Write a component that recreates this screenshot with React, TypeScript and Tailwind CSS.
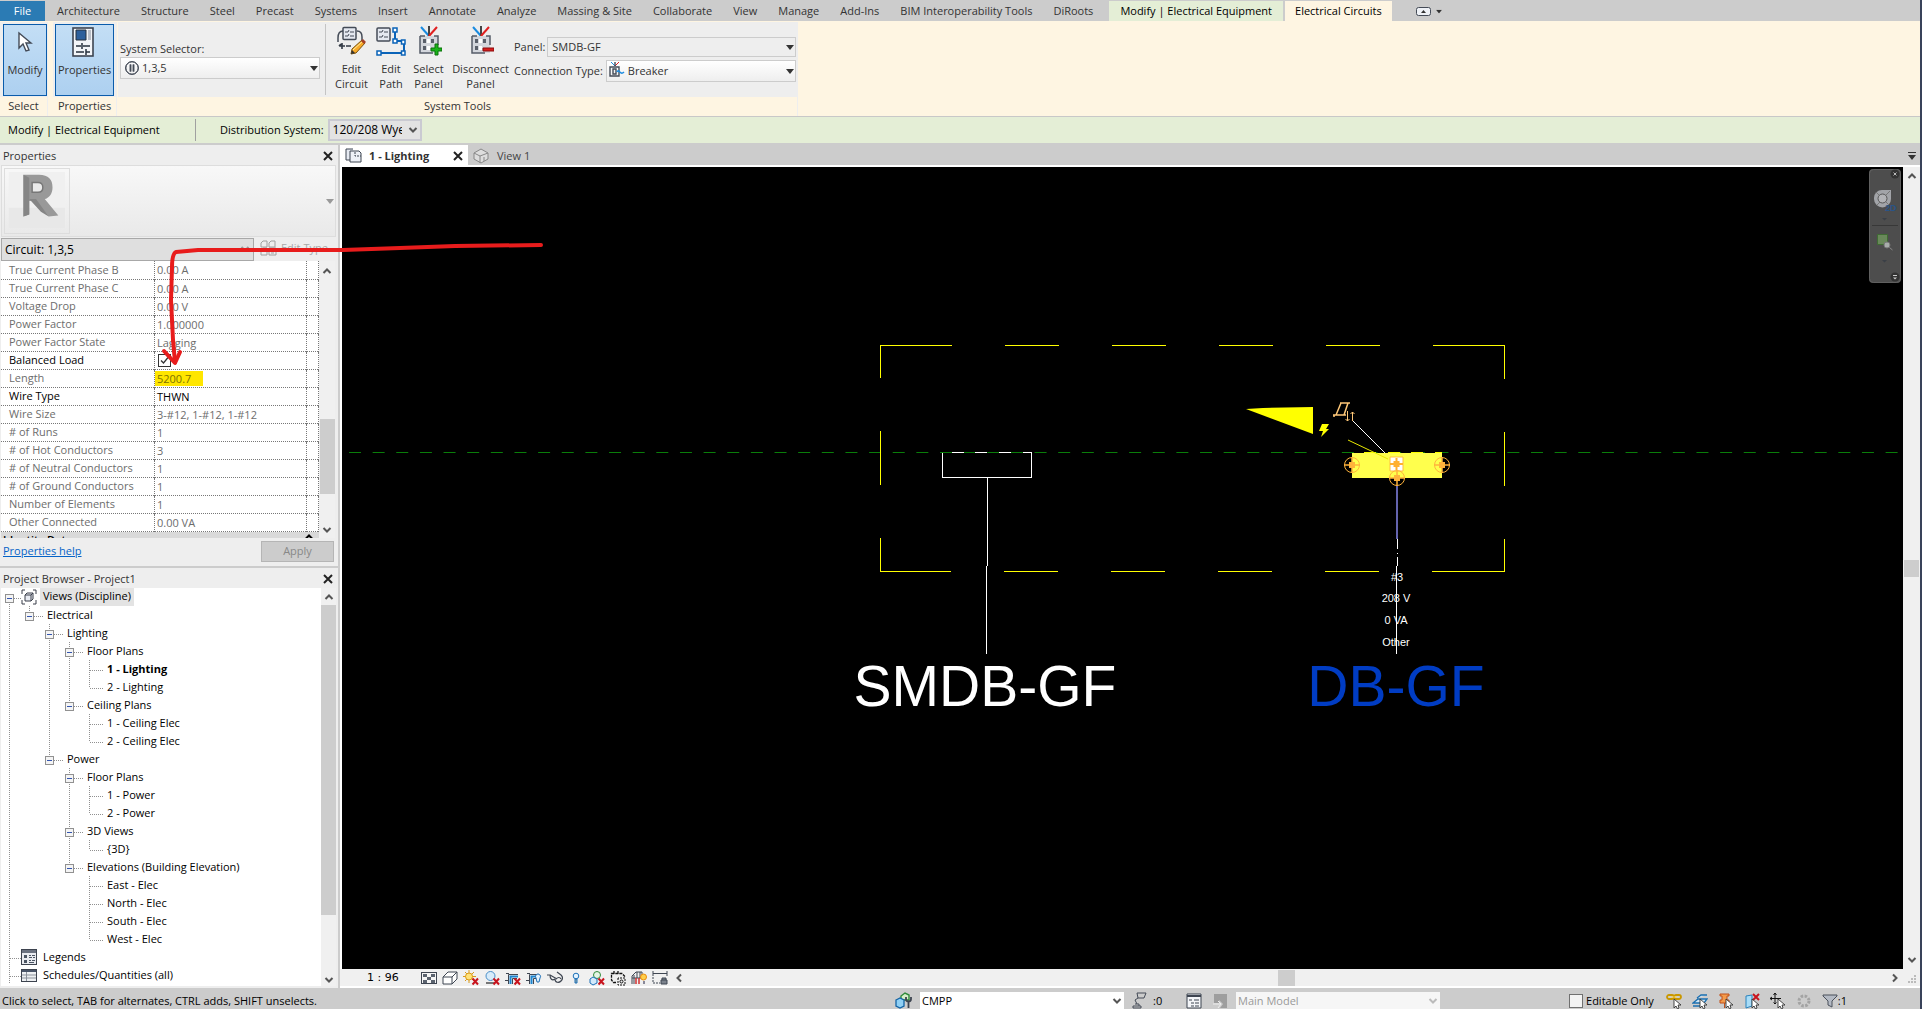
import React from 'react';

const ribbonTabs = [
  'Architecture', 'Structure', 'Steel', 'Precast', 'Systems', 'Insert', 'Annotate', 'Analyze',
  'Massing & Site', 'Collaborate', 'View', 'Manage', 'Add-Ins', 'BIM Interoperability Tools', 'DiRoots',
];

const properties = [
  { name: 'True Current Phase B', value: '0.00 A' },
  { name: 'True Current Phase C', value: '0.00 A' },
  { name: 'Voltage Drop', value: '0.00 V' },
  { name: 'Power Factor', value: '1.000000' },
  { name: 'Power Factor State', value: 'Lagging' },
  { name: 'Balanced Load', value: 'check', editable: true },
  { name: 'Length', value: '5200.7', marked: true },
  { name: 'Wire Type', value: 'THWN', editable: true },
  { name: 'Wire Size', value: '3-#12, 1-#12, 1-#12' },
  { name: '# of Runs', value: '1' },
  { name: '# of Hot Conductors', value: '3' },
  { name: '# of Neutral Conductors', value: '1' },
  { name: '# of Ground Conductors', value: '1' },
  { name: 'Number of Elements', value: '1' },
  { name: 'Other Connected', value: '0.00 VA' },
];

// guides: one letter per level. v = line, m = box with siblings below, e = last box,
// f = first box, t = tee, l = elbow, o = empty
const treeRows = [
  { guides: 'f', label: 'Views (Discipline)', icon: 'views', selected: true },
  { guides: 've', label: 'Electrical' },
  { guides: 'vom', label: 'Lighting' },
  { guides: 'vovm', label: 'Floor Plans' },
  { guides: 'vovvt', label: '1 - Lighting', bold: true },
  { guides: 'vovvl', label: '2 - Lighting' },
  { guides: 'vove', label: 'Ceiling Plans' },
  { guides: 'vovot', label: '1 - Ceiling Elec' },
  { guides: 'vovol', label: '2 - Ceiling Elec' },
  { guides: 'voe', label: 'Power' },
  { guides: 'voom', label: 'Floor Plans' },
  { guides: 'voovt', label: '1 - Power' },
  { guides: 'voovl', label: '2 - Power' },
  { guides: 'voom', label: '3D Views' },
  { guides: 'voovl', label: '{3D}' },
  { guides: 'vooe', label: 'Elevations (Building Elevation)' },
  { guides: 'vooot', label: 'East - Elec' },
  { guides: 'vooot', label: 'North - Elec' },
  { guides: 'vooot', label: 'South - Elec' },
  { guides: 'voool', label: 'West - Elec' },
  { guides: 't', label: 'Legends', icon: 'legends' },
  { guides: 't', label: 'Schedules/Quantities (all)', icon: 'schedules' },
];

const Caret: React.FC<{ className?: string }> = ({ className = '' }) => (
  <svg viewBox="0 0 8 5" className={`w-2 h-[5px] pointer-events-none ${className}`}>
    <path d="M0 0H8L4 5Z" fill="currentColor" />
  </svg>
);

const Chevron: React.FC<{ d: string; className?: string }> = ({ d, className = '' }) => (
  <svg viewBox="0 0 10 10" className={`w-[10px] h-[10px] pointer-events-none ${className}`}>
    <path d={d} fill="none" stroke="currentColor" strokeWidth="2" />
  </svg>
);
const UP = 'M1.5 7 5 3.5 8.5 7';
const DOWN = 'M1.5 3 5 6.5 8.5 3';
const LEFT = 'M7 1.5 3.5 5 7 8.5';
const RIGHT = 'M3 1.5 6.5 5 3 8.5';

const Cross: React.FC = () => (
  <svg viewBox="0 0 10 10" className="w-[10px] h-[10px]">
    <path d="M1 1 9 9M9 1 1 9" stroke="#222" strokeWidth="2" />
  </svg>
);

const CircuitIcon: React.FC<{ kind: string }> = ({ kind }) => {
  if (kind === 'circuit') {
    return (
      <svg viewBox="0 0 30 30" className="w-[30px] h-[30px]" fill="none">
        <path d="M6 5C2 5 1 8 1 12M1 12v4M20 5c4 0 5 3 5 6v5" stroke="#444b57" strokeWidth="1.5" />
        <rect x="6" y="1.5" width="13" height="12" rx="1" fill="#e4e8f0" stroke="#444b57" strokeWidth="1.5" />
        <path d="M8 6h3l1-2M13 6h4M8 10h3l1-2M13 10h4" stroke="#444b57" />
        <path d="M2 20h6M5 17v6M2 20l2-2M9 20h5" stroke="#333a45" strokeWidth="1.6" />
        <path d="m14 28 1-5 10-9 3 3-9 10z" fill="#f7a928" stroke="#7a5310" />
        <path d="m16 24 10-9" stroke="#fff0a0" />
        <path d="m14 28 1-4 3 3z" fill="#333" />
        <path d="m24 15 2-2 3 3-2 2z" fill="#a54028" />
      </svg>
    );
  }
  if (kind === 'path') {
    return (
      <svg viewBox="0 0 30 30" className="w-[30px] h-[30px]" fill="none">
        <rect x="1" y="2" width="13" height="13" rx="1" fill="#e4e8f0" stroke="#444b57" strokeWidth="1.5" />
        <path d="M3 6h3l1-2M8 6h4M3 11h3l1-2M8 11h4" stroke="#444b57" />
        <path d="M19 6v9h9v12H4" stroke="#0a63b8" strokeWidth="2" />
        <g fill="#fff" stroke="#0a63b8" strokeWidth="1.5">
          <rect x="17" y="2" width="4" height="4" />
          <rect x="17" y="13" width="4" height="4" />
          <rect x="25.5" y="14" width="3.5" height="4" />
          <rect x="25.5" y="25" width="3.5" height="4" />
          <rect x="1" y="25" width="4" height="4" />
        </g>
      </svg>
    );
  }
  return (
    <svg viewBox="-3 0 26 30" className="w-[26px] h-[30px]" fill="none">
      <path d="M2 1 10 10" stroke="#1a8be0" strokeWidth="2" />
      <path d="M10 0v10" stroke="#444" strokeWidth="2" />
      <path d="M18 1 10 10" stroke="#e02020" strokeWidth="2" />
      <path d="M1 10h18v17H1z" fill="#d3d6dc" />
      <path d="M1 10v17h13M1 10h5M15 10h4v9" stroke="#555c68" strokeWidth="1.5" />
      <path d="M4 13h3v4H4zM12 13h3v4h-3zM4 20h3v4H4z" fill="#5a606b" />
      <path d="M8 13h3v4H8zM8 20h3v4H8z" fill="#fff" />
      {kind === 'select' ? (
        <path d="M16 18h3v4h4v3h-4v4h-3v-4h-4v-3h4z" fill="#19b319" stroke="#0b700b" />
      ) : (
        <path d="M12 22h11v3H12z" fill="#d81e1e" stroke="#8b0d0d" />
      )}
    </svg>
  );
};

const ToolButton: React.FC<{ kind: string; lines: string[]; className: string }> = ({ kind, lines, className }) => (
  <button className={`flex flex-col items-center pt-1 ${className}`}>
    <CircuitIcon kind={kind} />
    <span className="mt-[5px] leading-[15px] text-center">
      {lines[0]}
      <br />
      {lines[1]}
    </span>
  </button>
);

const Guide: React.FC<{ type: string; last: boolean; short: boolean }> = ({ type, last, short }) => {
  const box = 'mef'.includes(type);
  return (
    <svg className={`h-[18px] shrink-0 ${last && !short ? 'w-[26px]' : 'w-5'}`} fill="none">
      <g stroke="#909090" strokeDasharray="1 1" shapeRendering="crispEdges">
        {'vtm'.includes(type) && <path d="M8.500 0V18" />}
        {'le'.includes(type) && <path d="M8.500 0V10" />}
        {type === 'f' && <path d="M8.500 10V18" />}
        {last && <path d={short ? 'M9 10.500H20' : 'M9 10.500H23'} />}
      </g>
      {box && (
        <g shapeRendering="crispEdges">
          <rect x="4.5" y="6.5" width="8" height="8" fill="#f4f4f4" stroke="#919191" />
          <path d="M6 10.500h5" stroke="#3355b0" />
        </g>
      )}
    </svg>
  );
};

const TreeIcon: React.FC<{ kind: string }> = ({ kind }) => (
  <svg viewBox="0 0 16 16" className="w-4 h-4 mr-[6px] shrink-0" fill="none">
    {kind === 'views' && (
      <g stroke="#3a3f4a">
        <path d="M4 1H1V5M12 1h3v4M4 15H1v-4M12 15h3v-4" />
        <path d="M4 6 6 4h6v6l-2 2H4zM4 6h6v6M10 6l2-2" fill="#e8ebf2" />
      </g>
    )}
    {kind === 'legends' && (
      <g>
        <rect x=".5" y=".5" width="15" height="15" fill="#e9ebf0" stroke="#3d434f" />
        <path d="M1 1h14v3H1z" fill="#6b7280" />
        <path d="M3 6h3v3H3zM3 11h3v3H3z" fill="#4b5563" />
        <path d="M8 6.500h2M11 6.500h3M8 8.500h3M12 8.500h2M8 11.500h2M11 11.500h3M8 13.500h5" stroke="#4b5563" />
      </g>
    )}
    {kind === 'schedules' && (
      <g>
        <rect x=".5" y="2.5" width="15" height="12" fill="#eef0f2" stroke="#3d434f" />
        <path d="M1 3h14v2H1z" fill="#4a5568" />
        <path d="M1 8h14M1 11h14M5.500 5v9" stroke="#8d939c" />
      </g>
    )}
  </svg>
);

const RedX: React.FC = () => <path d="m9.500 8.500 5.500 6M15 8.500l-5.500 6" stroke="#c8141e" strokeWidth="2" />;

const ViewIcon: React.FC<{ i: number }> = ({ i }) => (
  <svg viewBox="0 0 16 16" className="w-4 h-4 shrink-0" fill="none" stroke="#3f4652">
    {i === 0 && (
      <g>
        <rect x=".5" y="2.5" width="15" height="11" fill="#f5f5f5" />
        <path d="M2 4h4v3H2zM10 4h4v3h-4zM6 7h4v3H6zM2 10h4v3H2zM10 10h4v3h-4z" fill="#5b636f" stroke="none" />
      </g>
    )}
    {i === 1 && <path d="M1 7 6 2h9v7l-5 5H1zM1 7h9v7M10 7l5-5" fill="#fff" />}
    {i === 2 && (
      <g>
        <path d="M6 0v13M0 6.500h13M2 2l9 9M11 2l-9 9" stroke="#d99a18" />
        <circle cx="6" cy="6.5" r="3.5" fill="#ffe27a" stroke="#d99a18" />
        <RedX />
      </g>
    )}
    {i === 3 && (
      <g>
        <circle cx="6.5" cy="6" r="4.5" fill="#d7ebfa" stroke="#4a8fc9" />
        <path d="M2 13h9" stroke="#777" strokeWidth="2" />
        <RedX />
      </g>
    )}
    {(i === 4 || i === 5) && (
      <g>
        <path d="M0 10.500h3M3.500 14V4.500H13M7.500 14V8.500H12M1 3.500h3" />
        <path d="M5.500 14V6.500H13" stroke="#1c86d1" strokeWidth="2" />
        {i === 4 ? <RedX /> : <path d="M10 8a2.500 2.500 0 1 1 4 0l-1 4h-2z" fill="#e3f3ff" stroke="#1c70b8" />}
      </g>
    )}
    {i === 6 && <path d="M0 5h3c0 4 2 6 5 4M3 5l7 4M8 9c0 4 4 4 6 2s2-4 0-6l-4-3M9 9c2-2 4-2 5 0" strokeWidth="1.2" />}
    {i === 7 && (
      <g>
        <circle cx="8" cy="6" r="2.8" fill="#e3f3ff" stroke="#1c70b8" />
        <path d="M7 9h2v4H7z" fill="#9aa" stroke="#1c70b8" />
      </g>
    )}
    {i === 8 && (
      <g>
        <circle cx="8" cy="5" r="3.5" fill="#e4f5e4" stroke="#2f8a3a" />
        <path d="m1 9 3-2 4 2v4l-4 2-3-2z" fill="#d3eafb" stroke="#1c70b8" />
        <RedX />
      </g>
    )}
    {i === 9 && (
      <g>
        <path d="M6 12.500H3.500L1.500 10V3.500H12L14.500 6v1M4 1v3M8 1v3" stroke="#111" strokeWidth="1.3" strokeDasharray="3 1" />
        <path d="M8 8v7h7V8z" stroke="#111" strokeDasharray="2 1" />
        <circle cx="11.5" cy="11.5" r="1.5" stroke="#111" />
      </g>
    )}
    {i === 10 && (
      <g>
        <path d="M1 14V6l4-4h6v6M3 14V5M1 8h10M6 2v6M9 2v6" />
        <path d="M5 14V8M8 14V8" stroke="#d03030" strokeWidth="1.5" />
        <circle cx="12.5" cy="7" r="3" fill="#ffcf4a" stroke="#e88a10" />
        <path d="M12 11h2v3h-2z" fill="#889" stroke="none" />
      </g>
    )}
    {i === 11 && (
      <g>
        <path d="M1 1v5M15 1v5M1 3.500h14" />
        <path d="M1 7v6h7" strokeDasharray="2 1" />
        <path d="M9 10h6v4H9zM10 10V8h4v2" fill="#7b828c" />
      </g>
    )}
  </svg>
);

const Cursor: React.FC = () => (
  <path d="M8 6v9l2-2 1.500 3 1.500-1-1-3h3z" fill="#fff" stroke="#333" strokeWidth=".9" />
);

const SelectIcon: React.FC<{ i: number }> = ({ i }) => (
  <svg viewBox="0 0 16 16" className="w-4 h-4 shrink-0" fill="none">
    {i === 0 && (
      <g>
        <rect x="1" y="2" width="7" height="4" rx="2" stroke="#c99700" strokeWidth="1.8" />
        <rect x="8" y="2" width="7" height="4" rx="2" stroke="#c99700" strokeWidth="1.8" />
        <path d="M5 4h6" stroke="#ffd850" />
      </g>
    )}
    {i === 1 && <path d="M1 10 6 6h9l-3 4zM5 5l4-3h6M1 13h8" fill="#cfe8fa" stroke="#1b6fb0" strokeWidth="1.3" />}
    {i === 2 && <path d="M2 1h9v2H9v4h2v3H2V7h2V3H2zM6.500 10v5" fill="#f39a4b" stroke="#c0501a" />}
    {i === 3 && (
      <g>
        <path d="M2 3 8 2v11l-6 2z" fill="#a8dcf7" stroke="#2b83bd" />
        <path d="m9 1 6 6M15 1 9 7" stroke="#c8141e" strokeWidth="2" />
      </g>
    )}
    {i === 4 && <path d="M5 0v11M0 5.500h11M3.500 2 5 0l1.500 2M2 4 0 5.500 2 7M3.500 9.500 5 11l1.500-1.500" stroke="#111" />}
    {i === 5 && <circle cx="8" cy="8" r="5" stroke="#a3a3a3" strokeWidth="3" strokeDasharray="2.5 1.43" />}
    {i === 6 && <path d="M1 2h14v1l-5 5v6l-4-2V8L1 3z" fill="#b4bac4" stroke="#4a505b" />}
    {i < 5 && <Cursor />}
  </svg>
);

const Canvas: React.FC = () => (
  <svg viewBox="342 167 1561 802" className="w-full h-full block bg-black" fill="none">
    <path d="M349 452.500H1899" stroke="#0a7d0a" strokeWidth="1" strokeDasharray="12 11.640" />
    <g stroke="#ffff00" shapeRendering="crispEdges">
      <path d="M880.500 378V345.500H952M1005 345.500h54M1112 345.500h54M1219 345.500h54M1326 345.500h54M1433 345.500h71.500V379" />
      <path d="M880.500 538v33.500H951M1004 571.500h54M1111 571.500h54M1218 571.500h54M1325 571.500h54M1432 571.500h72.500V539" />
      <path d="M880.500 431v54M1504.500 432v54" />
    </g>

    {/* SMDB-GF panel */}
    <g stroke="#fff" shapeRendering="crispEdges">
      <path d="M942.500 453V477.500H1031.500V452.500H1023M952 452.500h12M975 452.500h12M999 452.500h12" />
      <path d="M987.500 478v88M986.500 566v88" />
    </g>
    <text x="985" y="706" textAnchor="middle" fill="#fff" fontSize="57" fontFamily="Liberation Sans, sans-serif">SMDB-GF</text>

    {/* tag and switch symbols */}
    <path d="M1246 409 1263 408 1313 407V434Z" fill="#ffff00" />
    <path d="M1322 424h7l-3 5h3l-8 8 2-6h-4z" fill="#ffff00" />
    <g stroke="#ffc878" strokeWidth="1.5">
      <path d="M1340 403h10M1341 403l-5 12M1348 403l-4 12M1333 415h13M1334 417v-2" />
      <path d="M1347.500 411v10M1345.500 419l2 2 2-2M1352.500 421v-9M1350.500 414l2-2 2 2" strokeWidth="1" />
    </g>
    <path d="M1353 421 1390 458" stroke="#fff" />

    {/* DB-GF panel */}
    <path d="M1352 453h90v25h-90z" fill="#ffff4d" />
    <path d="M1364 452.500h12M1388 452.500h12M1411 452.500h12M1435 452.500h7" stroke="#ffff00" />
    <path d="M1348 440 1388 459" stroke="#e8e800" />
    <path d="M1390 457h13v14h-13z" fill="#fff" stroke="#ffc040" />
    <path d="M1396.500 458v12M1390 464h13" stroke="#ffb030" strokeWidth="2" />
    <path d="M1393.500 461h6v6h-6z" fill="#ffb030" />
    {[[1352, 465], [1442, 465], [1397, 478]].map(([x, y]) => (
      <g key={x} stroke="#ffb43c">
        <circle cx={x} cy={y} r="7.5" />
        <path d={`M${x - 8} ${y}h16M${x} ${y - 8}v16`} strokeWidth="1.5" />
        <path d={`M${x - 3} ${y - 3}h6v6h-6z`} fill="#ffb43c" stroke="none" />
      </g>
    ))}
    <path d="M1397 486v53" stroke="#8484e8" strokeWidth="1.5" />
    <path d="M1397.500 539v10M1397.500 553v1M1397.500 557v9M1396.500 566v88" stroke="#fff" shapeRendering="crispEdges" />
    <g fill="#fff" fontSize="11" textAnchor="middle" fontFamily="Liberation Sans, sans-serif">
      <text x="1397" y="581">#3</text>
      <text x="1396" y="602">208 V</text>
      <text x="1396" y="624">0 VA</text>
      <text x="1396" y="646">Other</text>
    </g>
    <text x="1396" y="706" textAnchor="middle" fill="#003cc3" fontSize="57" fontFamily="Liberation Sans, sans-serif">DB-GF</text>
  </svg>
);

const App: React.FC = () => {
  return (
    <div className="relative h-screen flex overflow-hidden bg-[#cccccc] text-[11px] leading-4 text-black font-['Open_Sans',sans-serif]">
      <div className="flex-1 min-w-0 flex flex-col">
        {/* Ribbon tabs */}
        <nav className="h-[21px] pt-px flex gap-px shrink-0 text-[#333]">
          <button className="w-[45px] bg-[#2b7bb4] text-white mr-px">File</button>
          {ribbonTabs.map((tab) => (
            <button key={tab} className="px-[10px] whitespace-nowrap">{tab}</button>
          ))}
          <button className="px-[11px] ml-[5px] whitespace-nowrap bg-[#e4eed6] text-black">Modify | Electrical Equipment</button>
          <button className="px-[10px] ml-px whitespace-nowrap bg-[#fef5e2] text-black">Electrical Circuits</button>
          <button className="ml-[23px] flex items-center gap-1" aria-label="Minimize ribbon">
            <svg viewBox="0 0 15 9" className="w-[15px] h-[9px]">
              <rect x=".5" y=".5" width="14" height="8" rx="2" fill="#eef1f6" stroke="#444b57" />
              <path d="M5 6h5L7.500 3z" fill="#333" />
            </svg>
            <Caret className="scale-75" />
          </button>
        </nav>

        {/* Ribbon */}
        <header className="h-24 pt-px flex shrink-0 bg-[#fef5e2] border-b border-[#c8c8c8] text-[#333]">
          <section className="flex flex-col w-12 mr-[5px] border-r border-[#eee]">
            <div className="h-[75px] bg-[#eee] pl-[3px] pt-[2px] flex">
              <button className="w-11 h-[72px] border border-[#0a5cab] bg-linear-to-b from-[#c3def5] to-[#add0f0] flex flex-col items-center">
                <svg viewBox="0 0 16 22" className="w-4 h-[22px] mt-[6px]">
                  <path d="M2 2v15l4-4 3 7 3-1-3-7h5z" fill="#fff" stroke="#444b57" strokeWidth="1.4" />
                </svg>
                <span className="mt-[9px]">Modify</span>
              </button>
            </div>
            <span className="text-center pt-px">Select</span>
          </section>
          <section className="flex flex-col w-[64px] mr-px border-r border-[#eee]">
            <div className="h-[75px] bg-[#eee] pl-[2px] pt-[2px] flex">
              <button className="w-[59px] h-[72px] border border-[#0a5cab] bg-linear-to-b from-[#c3def5] to-[#add0f0] flex flex-col items-center">
                <svg viewBox="0 0 26 30" className="w-[26px] h-[30px] mt-[2px]" fill="none">
                  <rect x="1" y="1" width="20" height="28" fill="#f3f5f8" stroke="#3d4450" strokeWidth="1.6" />
                  <path d="M4 3h10v10H4z" fill="#2d5f9b" stroke="#27303d" />
                  <path d="M16 3h3v10h-3z" fill="#b9bec7" />
                  <path d="M4 19h5M11 19h7M10 16v6M4 25h8M14 25h4M14 22v6" stroke="#27303d" strokeWidth="1.5" />
                </svg>
                <span className="mt-[5px]">Properties</span>
              </button>
            </div>
            <span className="text-center pt-px">Properties</span>
          </section>
          <section className="flex flex-col w-[680px] border-r border-[#eee]">
            <div className="h-[75px] bg-[#eee] flex">
              <div className="w-[202px] pl-[2px] pt-[19px] flex flex-col">
                <label htmlFor="system">System Selector:</label>
                <div className="relative h-[22px]">
                  <svg viewBox="0 0 14 14" className="absolute left-[5px] top-1 w-[14px] h-[14px]" fill="none" stroke="#444b57">
                    <circle cx="7" cy="7" r="6.3" />
                    <path d="M5.500 3.500v7M8.500 3.500v7" strokeWidth="1.5" />
                  </svg>
                  <select id="system" className="w-full h-full appearance-none pl-[21px] border border-[#ccc] bg-linear-to-b from-white to-[#eee]">
                    <option>1,3,5</option>
                  </select>
                  <svg viewBox="0 0 14 14" className="absolute left-[5px] top-1 w-[14px] h-[14px] pointer-events-none" fill="none" stroke="#444b57">
                    <circle cx="7" cy="7" r="6.3" />
                    <path d="M5.500 3.500v7M8.500 3.500v7" strokeWidth="1.5" />
                  </svg>
                  <Caret className="absolute right-[2px] top-[9px]" />
                </div>
              </div>
              <div className="w-px ml-[5px] my-[2px] bg-[#c4c4c4]" />
              <div className="flex items-start ml-1">
                <ToolButton kind="circuit" lines={['Edit', 'Circuit']} className="w-[43px]" />
                <ToolButton kind="path" lines={['Edit', 'Path']} className="w-9" />
                <ToolButton kind="select" lines={['Select', 'Panel']} className="w-[39px]" />
                <ToolButton kind="disconnect" lines={['Disconnect', 'Panel']} className="w-[65px]" />
              </div>
              <div className="flex-1 min-w-0 flex flex-col pt-[15px] pl-px pr-px gap-[3px]">
                <div className="flex items-center gap-[2px]">
                  <label htmlFor="panel">Panel:</label>
                  <div className="relative flex-1 h-5">
                    <select id="panel" className="w-full h-full appearance-none pl-1 border border-[#ccc] bg-[#eee]">
                      <option>SMDB-GF</option>
                    </select>
                    <Caret className="absolute right-[2px] top-2" />
                  </div>
                </div>
                <div className="flex items-center gap-[3px]">
                  <label htmlFor="connection" className="whitespace-nowrap">Connection Type:</label>
                  <div className="relative flex-1 h-[22px]">
                    <select id="connection" className="w-full h-full appearance-none pl-[21px] border border-[#ccc] bg-linear-to-b from-white to-[#eee]">
                      <option>Breaker</option>
                    </select>
                    <svg viewBox="0 0 16 16" className="absolute left-[3px] top-[2px] w-4 h-4 pointer-events-none" fill="none">
                      <path d="m2 0 4 4" stroke="#1a8be0" />
                      <path d="m10 0-4 4" stroke="#e02020" />
                      <path d="M6 0v4M1 5h9v9H1zM4 7h3v5H4z" stroke="#444b57" strokeWidth="1.4" />
                      <path d="M8 10c2-4 3 4 7 0" stroke="#1a8be0" strokeWidth="1.5" />
                    </svg>
                    <Caret className="absolute right-[2px] top-[9px]" />
                  </div>
                </div>
              </div>
            </div>
            <span className="text-center pt-px">System Tools</span>
          </section>
        </header>

        {/* Options bar */}
        <div className="h-[26px] flex items-center shrink-0 bg-[#e4eed6]">
          <span className="w-[195px] pl-2">Modify | Electrical Equipment</span>
          <div className="w-px h-[22px] bg-[#a0a0a0]" />
          <label htmlFor="distribution" className="ml-6 mr-1">Distribution System:</label>
          <div className="relative w-[94px] h-[22px]">
            <select id="distribution" className="w-full h-full appearance-none pl-[3px] pr-[18px] border-2 border-[#cacad2] bg-[#e3e3e3] text-xs">
              <option>120/208 Wye</option>
            </select>
            <Chevron d={DOWN} className="absolute right-1 top-[6px] text-[#555]" />
          </div>
        </div>

        <div className="flex-1 min-h-0 flex pt-[2px]">
          {/* Left panels */}
          <aside className="w-[338px] mr-[2px] shrink-0 flex flex-col bg-[#eee]">
            <div className="h-5 pt-px px-[3px] pr-[5px] flex items-center justify-between text-[#333]">
              <h2>Properties</h2>
              <button aria-label="Close Properties"><Cross /></button>
            </div>
            <button className="h-[72px] ml-px mr-[2px] border border-[#ddd] bg-linear-to-b from-[#f8f8f8] to-[#e9e9e9] flex items-center pl-[2px] text-[#999]">
              <svg viewBox="0 0 66 66" className="w-[66px] h-[66px] border border-[#ddd]">
                <path d="M4 3h58v58H4z" fill="#f0f0f0" />
                <path d="M4 40h58v21H4z" fill="#e8e8e8" />
                <path d="M19 6h16c10 0 14 5 14 13 0 7-4 11-8 12l14 17-10 1L31 33h-6v14l-6 2z" fill="#999" />
                <path d="M19 6l6 3v38l-6 2zM25 31h7l13 18-8-5z" fill="#858585" />
                <path d="M28 14h6c4 0 5 2 5 5s-2 5-5 5h-6z" fill="#eaeaea" stroke="#777" strokeWidth="1.5" />
              </svg>
              <Caret className="ml-auto mr-px" />
            </button>
            <div className="h-6 pt-px flex items-center">
              <div className="relative ml-px w-[253px] h-[23px]">
                <select aria-label="Element filter" className="w-full h-full appearance-none pl-[3px] border border-[#a8a8a8] bg-[#dfdfdf] text-xs">
                  <option>Circuit: 1,3,5</option>
                </select>
                <Chevron d={DOWN} className="absolute right-1 top-[6px] text-[#999]" />
              </div>
              <button className="ml-[6px] pb-[3px] flex items-center gap-1 text-[#a8a8a8]" disabled>
                <svg viewBox="0 0 17 16" className="w-[17px] h-4" fill="none" stroke="#a0a0a0">
                  <path d="M7 1H3L1 3v4h6zM15 1h-4L9 3v4h6zM7 8H3l-2 2v5h6zM9 8h7v7H9zM9 10.500h7M11 13h3" />
                </svg>
                Edit Type
              </button>
            </div>
            <div className="flex-1 min-h-0 flex ml-px mr-[3px] overflow-hidden">
              <div className="flex-1 overflow-hidden bg-white">
                <table className="w-full table-fixed border-collapse text-[#6d6d6d]">
                  <colgroup>
                    <col />
                    <col className="w-[152px]" />
                    <col className="w-3" />
                  </colgroup>
                  <tbody>
                    {properties.map((row) => (
                      <tr key={row.name} className={`h-[18px] border-b border-dotted border-[#777] ${row.editable ? 'text-black' : ''}`}>
                        <td className="p-0 pl-2 h-[18px] whitespace-nowrap">{row.name}</td>
                        <td className="p-0 border-x border-dotted border-[#777]">
                          {row.value === 'check' ? (
                            <label className="relative block ml-[3px] w-[13px] h-[13px]">
                              <input type="checkbox" defaultChecked aria-label={row.name} className="block w-[13px] h-[13px] appearance-none border border-[#333] bg-white" />
                              <svg viewBox="0 0 13 13" className="absolute inset-0 pointer-events-none" fill="none" stroke="#333">
                                <path d="m3 6.500 2.500 2.500L10 3.500" strokeWidth="1.3" />
                              </svg>
                            </label>
                          ) : (
                            <span className={`block pl-[2px] h-[15px] leading-[15px] ${row.marked ? 'w-12 bg-[#ffe600] text-[#7d7200]' : ''}`}>{row.value}</span>
                          )}
                        </td>
                        <td className="p-0 border-r border-dotted border-[#777]" />
                      </tr>
                    ))}
                  </tbody>
                </table>
                <div className="bg-[#d9d9d9] pl-[2px] pr-[5px] flex justify-between font-semibold leading-4">
                  Identity Data
                  <Chevron d={UP} />
                </div>
              </div>
              <div className="w-4 flex flex-col items-center bg-[#f0f0f0] text-[#555]">
                <Chevron d={UP} className="mt-[5px]" />
                <div className="w-[15px] h-[75px] mt-[143px] bg-[#cdcdcd]" />
                <Chevron d={DOWN} className="mt-auto mb-[3px]" />
              </div>
            </div>
            <div className="h-7 pl-[3px] pr-1 pb-[2px] flex items-center justify-between">
              <a href="#help" className="text-[#0563c8] underline">Properties help</a>
              <button className="w-[73px] h-[21px] border border-[#b5b5b5] bg-[#ccc] text-[#888]" disabled>Apply</button>
            </div>
            <div className="h-[2px] bg-[#ccc]" />

            <div className="h-5 pt-px px-[3px] pr-[5px] flex items-center justify-between text-[#333]">
              <h2>Project Browser - Project1</h2>
              <button aria-label="Close Project Browser"><Cross /></button>
            </div>
            <div className="h-[398px] flex ml-px mr-[2px]">
              <ul className="flex-1 bg-white">
                {treeRows.map((row, r) => (
                  <li key={r} className="h-[18px] flex items-center whitespace-nowrap">
                    {row.guides.split('').map((type, i) => (
                      <Guide key={i} type={type} last={i === row.guides.length - 1} short={!!row.icon} />
                    ))}
                    {row.icon && <TreeIcon kind={row.icon} />}
                    <span className={row.selected ? 'bg-[#e3e3e3] px-[3px] -ml-[3px] h-[18px]' : row.bold ? 'font-bold' : ''}>{row.label}</span>
                  </li>
                ))}
              </ul>
              <div className="w-[15px] flex flex-col items-center bg-[#f0f0f0] text-[#555]">
                <Chevron d={UP} className="mt-1 mb-[3px]" />
                <div className="w-full h-[310px] bg-[#cdcdcd]" />
                <Chevron d={DOWN} className="mt-auto mb-[1px]" />
              </div>
            </div>
            <div className="h-[2px]" />
          </aside>

          {/* Drawing area */}
          <main className="flex-1 min-w-0 flex flex-col">
            <div className="h-[22px] flex shrink-0 border-b-2 border-white">
              <div className="w-32 h-5 pt-px bg-white flex items-center pl-[5px] pr-[5px] font-bold text-[#333]">
                <svg viewBox="0 0 17 15" className="w-[17px] h-[15px] mr-[7px]" fill="none" stroke="#3d4450">
                  <path d="M8 1H1v11h7" fill="#e6eaf2" />
                  <path d="M5 3h9l2 2v9H5z" fill="#eef1f7" />
                  <path d="M10 4v4h6" strokeDasharray="2 1" />
                </svg>
                1 - Lighting
                <button className="ml-auto" aria-label="Close view"><Cross /></button>
              </div>
              <button className="flex items-center gap-2 pl-[5px] pt-px text-[#444]">
                <svg viewBox="0 0 16 16" className="w-4 h-4" fill="#ddd" stroke="#888">
                  <path d="M1 5 8 1l7 4v6l-7 4-7-4zM1 5l6 3v7M7 8l8-3M11 13V9" />
                </svg>
                View 1
              </button>
              <svg viewBox="0 0 10 8" className="w-[10px] h-2 ml-auto mr-[3px] mt-[7px]">
                <path d="M1 0h8v1H1zM1 3h8L5 8z" fill="#333" />
              </svg>
            </div>
            <div className="flex-1 min-h-0 flex pl-[2px] bg-white">
              <div className="relative flex-1 min-w-0">
                <Canvas />
                <div className="absolute right-[2px] top-[2px] w-8 h-[114px] rounded bg-[#4d4d4d]">
                  <svg viewBox="0 0 32 114" className="w-full h-full" fill="none">
                    <rect x=".5" y=".5" width="31" height="113" rx="4" stroke="#606060" />
                    <circle cx="26" cy="5" r="4.5" fill="#333" />
                    <path d="m24.500 3.500 3 3M27.500 3.500l-3 3" stroke="#bbb" />
                    <path d="M5 29a8 8 0 0 1 8-8h9v9a8.500 8.500 0 0 1-17 0z" fill="#a2a4a8" />
                    <path d="m7 23 4 4M21 22l-4 4M8 36l3-3M17 33l3 3" stroke="#777" />
                    <circle cx="13.5" cy="29.5" r="4.5" fill="#b2b3b6" stroke="#555" />
                    <text x="16" y="42" fill="#2a5487" fontSize="9" fontWeight="bold" fontFamily="Liberation Sans, sans-serif">2D</text>
                    <path d="M13 49h5l-2.500 2.500zM13 91h5l-2.500 2.500z" fill="#3a3f46" />
                    <path d="M3 56.500h26" stroke="#383838" />
                    <path d="M8.500 65.500h10v10h-10z" fill="#69885a" stroke="#3f6b33" />
                    <circle cx="18" cy="76" r="3" fill="#a8adab" stroke="#777" />
                    <path d="m20.500 78.500 3 2.500" stroke="#888" />
                    <circle cx="26" cy="108" r="4.5" fill="#333" />
                    <path d="M24 106h4v1h-4zM24 108.500h4l-2 2z" fill="#ccc" />
                  </svg>
                </div>
              </div>
              <div className="w-[17px] flex flex-col items-center justify-between py-1 bg-[#f0f0f0] text-[#555]">
                <Chevron d={UP} />
                <div className="w-[15px] h-[17px] bg-[#cdcdcd]" />
                <Chevron d={DOWN} />
              </div>
            </div>
            <div className="h-[19px] shrink-0 flex items-center bg-[#f0f0f0] border-b-2 border-white pl-[27px]">
              <span className="w-[54px] font-['DejaVu_Sans',sans-serif] whitespace-nowrap">1 : 96</span>
              <div className="flex gap-[5px] text-[#555] items-center">
                {Array.from({ length: 12 }, (_, i) => <ViewIcon key={i} i={i} />)}
                <Chevron d={LEFT} className="ml-px" />
              </div>
              <div className="w-[17px] h-4 ml-[594px] bg-[#cdcdcd]" />
              <Chevron d={RIGHT} className="ml-auto text-[#555]" />
              <svg viewBox="0 0 9 9" className="w-[9px] h-[9px] ml-2 mr-[3px] mt-1" fill="#bbb">
                <path d="M6 0h2v2H6zM6 3h2v2H6zM3 3h2v2H3zM6 6h2v2H6zM3 6h2v2H3zM0 6h2v2H0z" />
              </svg>
            </div>
          </main>
        </div>

        {/* Status bar */}
        <footer className="h-[21px] pt-1 shrink-0 flex items-center">
          <span className="w-[895px] pl-[2px]">Click to select, TAB for alternates, CTRL adds, SHIFT unselects.</span>
          <svg viewBox="0 0 17 17" className="w-[17px] h-[17px] mr-2" fill="none">
            <path d="m6 4 4-3 4 2v5H6z" fill="#d5f0c8" stroke="#2f8a3a" strokeWidth="1.4" />
            <path d="m1 8 4-2 4 2v6l-4 2-4-2z" fill="#8fd0f5" stroke="#1464a5" strokeWidth="1.3" />
            <path d="M13.500 9v7M11 5v2a2.500 2.500 0 0 0 5 0V5" stroke="#3d4450" strokeWidth="1.8" />
          </svg>
          <div className="relative w-[204px] h-[17px]">
            <select aria-label="Active workset" className="w-full h-full appearance-none bg-white pl-[2px]">
              <option>CMPP</option>
            </select>
            <Chevron d={DOWN} className="absolute right-[2px] top-1 text-[#555]" />
          </div>
          <svg viewBox="0 0 16 17" className="w-4 h-[17px] ml-2 mr-[5px]" fill="none" stroke="#444b57">
            <path d="M5 1h9l-2 5H6zM6 6 3 8l2 4M1 16h8v-2H1zM3 12h4v2" />
          </svg>
          <span className="w-[33px]">:0</span>
          <svg viewBox="0 0 17 16" className="w-[17px] h-4 mr-[9px]" fill="none" stroke="#3d4450">
            <path d="M1 1h14v14H1z" fill="#f3f5f8" />
            <path d="M1 3h14" strokeWidth="2" />
            <path d="M3 7h3M8 7h5M5 10h3M9 10h4M5 13h3M9 13h4" />
          </svg>
          <svg viewBox="0 0 16 16" className="w-4 h-4 mr-2" fill="none">
            <path d="M2 1h13v14H8l3-4-4-4v3H2z" fill="#9e9e9e" />
            <path d="M1 11h7M6 8l3 3-3 4" stroke="#eee" />
          </svg>
          <div className="relative w-[204px] h-[17px]">
            <select aria-label="Design option" disabled className="w-full h-full appearance-none bg-[#f6f6f6] pl-[2px] text-[#999]">
              <option>Main Model</option>
            </select>
            <Chevron d={DOWN} className="absolute right-[2px] top-1 text-[#bbb]" />
          </div>
          <label className="ml-auto flex items-center gap-[3px] mr-3">
            <input type="checkbox" className="w-[14px] h-[14px] appearance-none border border-[#707070] bg-[#f3f3f3]" />
            Editable Only
          </label>
          <div className="flex items-center gap-[10px] mr-[73px]">
            {Array.from({ length: 6 }, (_, i) => <SelectIcon key={i} i={i} />)}
            <span className="flex items-center">
              <SelectIcon i={6} />:1
            </span>
          </div>
        </footer>
      </div>
      <div className="w-[2px] bg-[#39435a]" />

      {/* Markup arrow */}
      <svg className="absolute left-0 top-0 w-[560px] h-[380px] pointer-events-none" fill="none" stroke="#e81c1c" strokeLinecap="round" strokeLinejoin="round">
        <path d="M541 245 455 246 400 248 343 250H215L198 250 176 252Q172 254 172 267L171 300 173 340 175 362" strokeWidth="4" />
        <path d="M164 351 175 363 180 352" strokeWidth="4" />
      </svg>
    </div>
  );
};

export default App;
